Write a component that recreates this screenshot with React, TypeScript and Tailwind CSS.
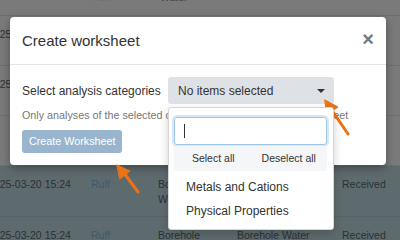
import React from 'react'

const font = { fontFamily: '"Liberation Sans", Arial, sans-serif' }

type Row = { h: string; bg: string; line: string; date?: string; ruff?: boolean; col3?: string; col4?: string; status?: string }

function TableRow({ h, bg, line, date, ruff, col3, col4, status }: Row) {
  return (
    <div className={`flex shrink-0 border-b ${h} ${bg} ${line} pt-[11px] text-[10.5px] leading-[15px] text-[#2b3133]`}>
      <div className="ml-[-12px] w-[103px] shrink-0 whitespace-nowrap">{date}</div>
      <div className="w-[67px] shrink-0 text-[#3e5a6c]">{ruff ? 'Ruff' : ''}</div>
      <div className="w-[79px] shrink-0 pr-[44px]">{col3}</div>
      <div className="w-[105px] shrink-0 whitespace-nowrap">{col4}</div>
      <div className="shrink-0">{status}</div>
    </div>
  )
}

export default function App() {
  return (
    <div className="relative h-[240px] w-[400px] overflow-hidden bg-[#7a7a7a]" style={font}>
      {/* table behind the backdrop */}
      <div className="flex h-full flex-col">
        <div className="flex h-[16px] shrink-0 border-b border-[#6f6f6f] text-[10.5px] leading-[15px]">
          <div className="ml-[92px] mt-[-10px] w-[68px] text-[#637078]">Ruff</div>
          <div className="mt-[-10px] text-[#444]">Water</div>
        </div>
        <TableRow h="h-[50px]" bg="bg-[#7a7a7a]" line="border-[#6f6f6f]" date="2025-03-20 15:24" />
        <TableRow h="h-[50px]" bg="bg-[#7a7a7a]" line="border-[#6f6f6f]" date="2025-03-20 15:24" />
        <TableRow h="h-[50px]" bg="bg-[#7a7a7a]" line="border-[#6f6f6f]" />
        <TableRow h="h-[51px]" bg="bg-[#5e6b6e]" line="border-[#566265]" date="2025-03-20 15:24" ruff col3="Borehole Water" col4="Borehole Water" status="Received" />
        <TableRow h="h-[40px]" bg="bg-[#5e6b6e]" line="border-[#566265]" date="2025-03-20 15:24" ruff col3="Borehole" col4="Borehole Water" status="Received" />
      </div>

      {/* modal */}
      <div className="absolute left-[10px] top-[17px] w-[376px] rounded-[4px] bg-white shadow-[0_3px_9px_rgba(0,0,0,0.35)]">
        <div className="flex h-[48px] items-center justify-between border-b border-[#e5e5e5] px-[12px]">
          <h4 className="text-[15px] leading-[18px] text-[#333]">Create worksheet</h4>
          <span className="mt-[-4px] text-[20px] font-bold leading-[20px] text-[#777]">×</span>
        </div>
        <div className="px-[12px] pb-[12px] pt-[12px]">
          <div className="flex items-center">
            <label className="w-[146px] shrink-0 text-[12px] text-[#333]">Select analysis categories</label>
            <div className="relative">
              <button className="flex h-[27px] w-[166px] items-center justify-between rounded-[3px] bg-[#dee1e5] pl-[10px] pr-[9px] text-[12px] text-[#333]">
                <span>No items selected</span>
                <span className="h-0 w-0 border-x-[4px] border-t-[4px] border-x-transparent border-t-[#333]" />
              </button>
              <div className="absolute left-0 top-full z-10 mt-[3px] w-[166px] rounded-[3px] border border-[#d6d6d6] bg-white px-[5px] pb-[6px] pt-[9px] shadow-[0_4px_10px_rgba(0,0,0,0.18)]">
                <div className="flex h-[28px] w-[153px] items-center rounded-[3px] border border-[#9cc6ea] pl-[9px] shadow-[0_0_0_2px_rgba(170,205,235,0.45)]">
                  <span className="h-[14px] w-px bg-[#333]" />
                </div>
                <div className="mt-[1px] flex h-[25px] w-[153px] items-center bg-[#f5f6f8] text-[10.5px] text-[#333]">
                  <span className="w-1/2 pl-[2px] text-center">Select all</span>
                  <span className="w-1/2 text-center">Deselect all</span>
                </div>
                <ul className="text-[12px] leading-[24px] text-[#333]">
                  <li className="pl-[12px] pt-[4px]">Metals and Cations</li>
                  <li className="pl-[12px]">Physical Properties</li>
                </ul>
              </div>
            </div>
          </div>
          <p className="mt-[4px] whitespace-nowrap text-[10.75px] leading-[14px] text-[#777]">
            Only analyses of the selected categories are added to the worksheet
          </p>
          <button className="mt-[8px] h-[23px] rounded-[3px] bg-[#98b5cd] px-[7px] text-[10.75px] text-white">
            Create Worksheet
          </button>
        </div>
      </div>

      {/* annotation arrows */}
      <svg className="pointer-events-none absolute inset-0" width="400" height="240" viewBox="0 0 400 240">
        <g fill="#ea7316" stroke="#ea7316" strokeWidth="3" strokeLinecap="round">
          <line x1="348" y1="134" x2="331" y2="109" />
          <polygon points="325,100 338,107 327,115" strokeWidth="1" strokeLinejoin="round" />
          <line x1="138" y1="192" x2="124" y2="173" />
          <polygon points="117,165 130,171 120,179" strokeWidth="1" strokeLinejoin="round" />
        </g>
      </svg>
    </div>
  )
}
